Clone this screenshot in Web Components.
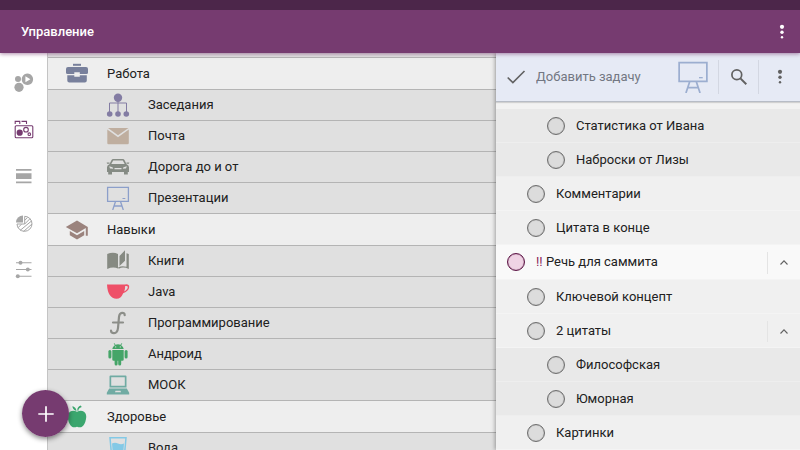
<!DOCTYPE html>
<html lang="ru">
<head>
<meta charset="utf-8">
<meta name="viewport" content="width=device-width, initial-scale=1">
<title>Управление</title>
<style>
html, body { margin: 0; height: 100%; overflow: hidden; }
body { font: 13px/20px Roboto, "Noto Sans", sans-serif; color: #212121; background: #fff; }
</style>
</head>
<body>
<task-app></task-app>
<script>
const ICONS = {
  projects: '<circle cx="6" cy="8" r="3"/><circle cx="7" cy="16.3" r="4.6"/><path fill-rule="evenodd" d="M15.4 2.6a5.7 5.7 0 1 0 .01 0zM13.4 5.3l5 3-5 3z"/>',
  board: '<g fill="none" stroke="currentColor" stroke-width="1.1"><rect x="3.2" y="7.8" width="17.6" height="12" rx="1"/><path d="M3.200 6V3.400h4.600V6M9.500 3.400h5V6"/><circle cx="14" cy="11.700" r="2.300"/><circle cx="17.300" cy="16.200" r="1.300"/></g><circle cx="7.700" cy="14.700" r="3.100"/>',
  blocks: '<path d="M4 4h15.500v1.700H4zM4 8.200h15.500v5.800H4zM4 16.600h15.500v1.700H4z"/>',
  pie: '<path d="M11 10.500H4a7 7 0 0 1 7-7z"/><g fill="none" stroke="currentColor" stroke-width="1"><path d="M12.700 4.300a7.500 7.500 0 1 1-7.700 7.700h7.700z"/><path d="M12.700 12l5.400-5.400M12.700 8.400l3-3M6 15.700l3.500-3.500M8 18.500l11.500-9.500M11.500 19.500l8.500-7.500"/></g>',
  sliders: '<path d="M4 3.300h15.500v1H4zM4 10h15.500v1H4zM4 16.700h15.500v1H4z"/><circle cx="8.500" cy="3.800" r="2"/><circle cx="15.800" cy="10.500" r="2"/><circle cx="5.800" cy="17.200" r="2"/>',
  briefcase: '<path d="M8 1.800h8v2H8z"/><path d="M3 5h18a2 2 0 0 1 2 2v3.800q0 1.200-1.500 1.200h-6.700v-1.700H9.300V12H2.500Q1 12 1 10.800V7a2 2 0 0 1 2-2z"/><path d="M2.300 13.200h7v1.500h5.500v-1.500h7v5.300a2 2 0 0 1-2 2H4.300a2 2 0 0 1-2-2z"/>',
  tree: '<circle cx="12" cy="4.800" r="4.200"/><circle cx="3.700" cy="21" r="2.800"/><circle cx="12" cy="21" r="2.800"/><circle cx="20.300" cy="21" r="2.800"/><path fill="none" stroke="currentColor" d="M12 8v11M3.500 19v-9h17v9"/>',
  mail: '<path d="M1.300 5.600L12 13.200l10.800-7.600V19a1.300 1.300 0 0 1-1.300 1.300h-19A1.300 1.300 0 0 1 1.300 19zM2 4h20.500L12 11.200z"/>',
  car: '<path fill-rule="evenodd" d="M7.200 4h9.600q1.200 0 1.800 1.200l2 4q2.400.8 2.400 3V17h-1.200v2.500H18V17H6v2.500H2.200V17H1v-4.800q0-2.200 2.400-3l2-4Q6 4 7.200 4zM7.200 5.400L5.300 9h13.400l-1.900-3.600zM3.200 11.200l.8 2.200 3.300.4-.8-1.600zM20.800 11.200l-.8 2.200-3.300.4.800-1.600zM8.500 13v1.300h7V13z"/><path d="M.7 7.500h2.800v1.300H1zM23.300 7.500h-2.800v1.300H23z"/>',
  easel: '<g fill="none" stroke="currentColor" stroke-width="1.300"><path d="M1.600 1.300h20.800v14H1.600zM9.500 15.500L6.700 24M14.500 15.500l2.800 8.500M7.800 20h8.400"/></g><path d="M16.500 12h2.800v1h-2.800z"/>',
  cap: '<path d="M12 2.500L.8 9 12 15.300 20.800 10v7.700h2V9z"/><path d="M4.800 13v4.300l7.200 4.200 7.200-4.200V13L12 17.200z"/>',
  book: '<path d="M1.200 5Q7 2.500 12 5v14.500Q7 17.500 1.200 20zM13.500 7L19 1.200v10.500L13.500 17zM20.500 4.300l2.300.7v15q-5.500-2.500-9.500-.5h-1v-1.200q3.500-2 8.200-.5z"/>',
  cup: '<path fill-rule="evenodd" d="M1 4.500h18q4.300-.7 4.200 2.500-.3 4-6 6.200-2.300 5.500-6.700 5.500Q1.700 18.500 1 4.500zM19.200 6q0 2.500-1 5.500 3.600-2 3.600-4.400 0-1.500-2.600-1.100z"/>',
  func: '<path fill="none" stroke="currentColor" stroke-width="2.200" stroke-linecap="round" d="M18.700 4.200q0-2.500-2.700-2.300-2.600.2-3 4L12 17q-.5 5-4 5.200-3 0-3-2.700M7 11.500h10"/>',
  android: '<path d="M8.200.9l1.300 1.900q2.500-.9 5 0L15.800.9l.5.400L15.200 3.200Q17.500 4.600 17.700 7H6.300q.2-2.400 2.500-3.800L7.700 1.300z"/><path d="M6.300 8h11.400v9.500q0 1.200-1.300 1.200h-1.200v3.200a1.500 1.500 0 0 1-3 0v-3.200h-.6v3.200a1.500 1.500 0 0 1-3 0v-3.200H7.600q-1.300 0-1.300-1.200z"/><rect x="2.400" y="8" width="3" height="8.500" rx="1.500"/><rect x="18.600" y="8" width="3" height="8.500" rx="1.500"/><g fill="#e0e0e0"><circle cx="9.700" cy="4.900" r=".6"/><circle cx="14.300" cy="4.900" r=".6"/></g>',
  laptop: '<path fill-rule="evenodd" d="M4.500 2.500h15q1 0 1 1v11h-17v-11q0-1 1-1zM5.200 4.200v8.600h13.600V4.200zM3.200 15.500h17.600l2.400 4.200v1.800H.8v-1.800zM9.500 17.700L9 19.300h6l-.5-1.600z"/>',
  apple: '<path d="M12 6.700q4-2 7 0 3 2.300 2 7.300-1 5.500-4 7.800-1.800 1-5 0-3.200 1-5 0-3-2.300-4-7.800-1-5 2-7.300 3-2 7 0z"/><path d="M11.500 6Q11.300 2.500 7.500 1 7.300 4.500 11.500 6zM12.300 5.500Q12 2 15.800.6L16.700 2Q13.300 3 13.300 6z"/>',
  glass: '<path fill="none" stroke="currentColor" stroke-width="1.500" d="M4 1.800h16L18.200 22H5.800z"/><path d="M6 7.500q3-1.500 6 0t6 0L17 20.500H7z"/>',
  check: '<path fill="none" stroke="currentColor" stroke-width="1.600" d="M3.700 12.500l5.200 5.100L20.500 6"/>',
  search: '<g fill="none" stroke="currentColor" stroke-width="1.700"><circle cx="9.800" cy="9.800" r="4.900"/><path d="M13.400 13.400l5.900 5.900" stroke-width="2"/></g>',
  more: '<circle cx="12" cy="6.800" r="2.100"/><circle cx="12" cy="12.200" r="1.700"/><circle cx="12" cy="17.200" r="1.200"/>',
  up: '<path fill="none" stroke="currentColor" stroke-width="1.100" d="M8.500 13.500l3.500-3.600 3.500 3.600"/>',
  plus: '<path fill="none" stroke="currentColor" stroke-width="1.700" d="M12 4.300v15.400M4.300 12h15.400"/>'
};

const define = (name, html, setup) => {
  const template = document.createElement('template');
  template.innerHTML = html;
  customElements.define(name, class extends HTMLElement {
    constructor() {
      super();
      this.attachShadow({ mode: 'open' }).append(template.content.cloneNode(true));
    }
    connectedCallback() { if (setup) setup(this, this.shadowRoot); }
  });
};

define('app-icon', `<style>
  :host { display: block; flex: none; width: 24px; height: 24px; }
  svg { display: block; width: 100%; height: 100%; fill: currentColor; }
</style><svg viewBox="0 0 24 24" aria-hidden="true"></svg>`,
(host, root) => { root.querySelector('svg').innerHTML = ICONS[host.getAttribute('name')] || ''; });

define('icon-button', `<style>
  :host { display: flex; flex: none; }
  button { all: unset; flex: 1; display: flex; align-items: center; justify-content: center; cursor: pointer; }
  button:focus-visible { outline: 2px solid #763b70; outline-offset: -2px; }
</style><button type="button"><slot></slot></button>`,
(host, root) => root.querySelector('button').setAttribute('aria-label', host.getAttribute('label')));

define('app-bar', `<style>
  :host { display: flex; align-items: center; justify-content: space-between; height: 43px; padding-left: 21px;
    border-top: 10px solid #4c264a; background: #763b70; color: #fff; box-shadow: 0 1px 4px #763b7099; position: relative; z-index: 3; }
  h1 { margin: 0; font-size: 13px; font-weight: 500; }
  icon-button { width: 37px; height: 43px; }
</style><h1><slot></slot></h1><icon-button label="Ещё"><app-icon name="more"></app-icon></icon-button>`);

define('side-nav', `<style>
  :host { display: block; padding-top: 6px; background: #fff; color: #a6a6a6; }
  nav { display: grid; grid-auto-rows: 47px; }
  .active { color: #763b70; }
</style><nav aria-label="Разделы">
  <icon-button label="Проекты"><app-icon name="projects"></app-icon></icon-button>
  <icon-button class="active" label="Категории"><app-icon name="board"></app-icon></icon-button>
  <icon-button label="Список"><app-icon name="blocks"></app-icon></icon-button>
  <icon-button label="Статистика"><app-icon name="pie"></app-icon></icon-button>
  <icon-button label="Настройки"><app-icon name="sliders"></app-icon></icon-button>
</nav>`);

define('category-row', `<style>
  :host { display: block; background: #e0e0e0; border-bottom: 1px solid #b4b4b4; }
  button { all: unset; box-sizing: border-box; width: 100%; height: 30px; display: flex; align-items: center; gap: 18px; padding-left: 58px; cursor: pointer; }
  :host([group]) { background: #eeeeee; }
  :host([group]) button { height: 31px; padding-left: 17px; }
</style><button type="button"><app-icon></app-icon><span><slot></slot></span></button>`,
(host, root) => {
  const icon = root.querySelector('app-icon');
  icon.style.color = host.getAttribute('color');
  icon.setAttribute('name', host.getAttribute('icon'));
  icon.connectedCallback();
});

define('category-list', `<style>
  :host { display: block; overflow: hidden; min-height: 0; background: #e0e0e0; border-left: 1px solid #c4c4c4; }
  div { border-top: 1px solid #b4b4b4; margin-top: 4px; }
</style><div><slot></slot></div>`);

define('task-row', `<style>
  :host { display: flex; height: 34px; box-sizing: border-box; background: #f0f0f0; border-bottom: 1px solid #f4f4f4; --indent: 31px; }
  :host([level="0"]) { height: 35px; background: #f9f9f9; --indent: 11px; }
  :host([level="2"]) { background: #e9e9e9; border-color: #eeeeee; --indent: 51px; }
  label { flex: 1; display: flex; align-items: center; gap: 11px; padding-left: var(--indent); cursor: pointer; }
  input { appearance: none; flex: none; box-sizing: border-box; width: 18px; height: 18px; margin: 0; border: 1px solid #6e6e6e; border-radius: 50%; background: #dcdcdc; box-shadow: inset 0 0 1px #6e6e6e; }
  input:checked { background: #8a8a8a; }
  :host([level="0"]) input { border-color: #5d1646; background: #efd3e4; box-shadow: inset 0 0 1px #5d1646; }
  b { font-weight: 400; color: #8a1f5a; }
  icon-button { display: none; width: 33px; margin: 7px 0 5px; border-left: 1px solid #e4e4e4; color: #616161; box-sizing: border-box; }
  :host([open]) icon-button { display: flex; }
</style><label><input type="checkbox"><span><b></b><slot></slot></span></label><icon-button label="Свернуть"><app-icon name="up"></app-icon></icon-button>`,
(host, root) => { if (host.hasAttribute('mark')) root.querySelector('b').textContent = host.getAttribute('mark') + ' '; });

define('task-panel', `<style>
  :host { display: block; min-height: 0; background: #f2f2f2; box-shadow: -1px 0 4px #0005; z-index: 1; }
  form { display: flex; align-items: center; height: 49px; box-sizing: border-box; margin: 0 0 7px; padding-left: 8px; background: #e6eaf5; border-bottom: 1px solid #b7bcc6; box-shadow: 0 1px 1px #0002; color: #616161; }
  input { all: unset; flex: 1; min-width: 0; margin-left: 8px; font-size: 13px; line-height: 20px; color: #424242; }
  input::placeholder { color: #737782; opacity: 1; }
  .easel { width: 32px; height: 32px; margin-right: 9px; color: #9caed0; }
  icon-button { height: 34px; border-left: 1px solid #d3d7e2; box-sizing: border-box; }
  .search { width: 40px; } .more { width: 42px; }
  .done { border: 0; }
</style><form>
  <icon-button class="done" label="Готово"><app-icon name="check"></app-icon></icon-button>
  <input type="text" placeholder="Добавить задачу" aria-label="Добавить задачу">
  <app-icon class="easel" name="easel"></app-icon>
  <icon-button class="search" label="Поиск"><app-icon name="search"></app-icon></icon-button>
  <icon-button class="more" label="Ещё"><app-icon name="more"></app-icon></icon-button>
</form><slot></slot>`);

define('add-button', `<style>
  :host { position: absolute; left: 22px; bottom: 13px; z-index: 4; border-radius: 50%; box-shadow: 0 2px 5px #0007; }
  icon-button { width: 47px; height: 47px; border-radius: 50%; background: #763b70; color: #fff; }
</style><icon-button label="Добавить"><app-icon name="plus"></app-icon></icon-button>`);

define('task-app', `<style>
  :host { display: grid; grid-template-rows: auto 1fr; height: 100vh; position: relative; overflow: hidden; }
  main { display: grid; grid-template-columns: 47px 1fr 38%; grid-template-rows: minmax(0, 1fr); min-height: 0; }
</style>
<app-bar>Управление</app-bar>
<main>
  <side-nav></side-nav>
  <category-list>
    <category-row group icon="briefcase" color="#78809c">Работа</category-row>
    <category-row icon="tree" color="#837ca3">Заседания</category-row>
    <category-row icon="mail" color="#bfae9f">Почта</category-row>
    <category-row icon="car" color="#858b84">Дорога до и от</category-row>
    <category-row icon="easel" color="#8c9fca">Презентации</category-row>
    <category-row group icon="cap" color="#9b837d">Навыки</category-row>
    <category-row icon="book" color="#868a82">Книги</category-row>
    <category-row icon="cup" color="#ee5068">Java</category-row>
    <category-row icon="func" color="#8c8e89">Программирование</category-row>
    <category-row icon="android" color="#45a568">Андроид</category-row>
    <category-row icon="laptop" color="#70aba3">МООК</category-row>
    <category-row group icon="apple" color="#3ba66e">Здоровье</category-row>
    <category-row icon="glass" color="#83c9e6">Вода</category-row>
  </category-list>
  <task-panel>
    <task-row level="2">Статистика от Ивана</task-row>
    <task-row level="2">Наброски от Лизы</task-row>
    <task-row level="1">Комментарии</task-row>
    <task-row level="1">Цитата в конце</task-row>
    <task-row level="0" mark="!!" open>Речь для саммита</task-row>
    <task-row level="1">Ключевой концепт</task-row>
    <task-row level="1" open>2 цитаты</task-row>
    <task-row level="2">Философская</task-row>
    <task-row level="2">Юморная</task-row>
    <task-row level="1">Картинки</task-row>
  </task-panel>
</main>
<add-button></add-button>`);
</script>
</body>
</html>
